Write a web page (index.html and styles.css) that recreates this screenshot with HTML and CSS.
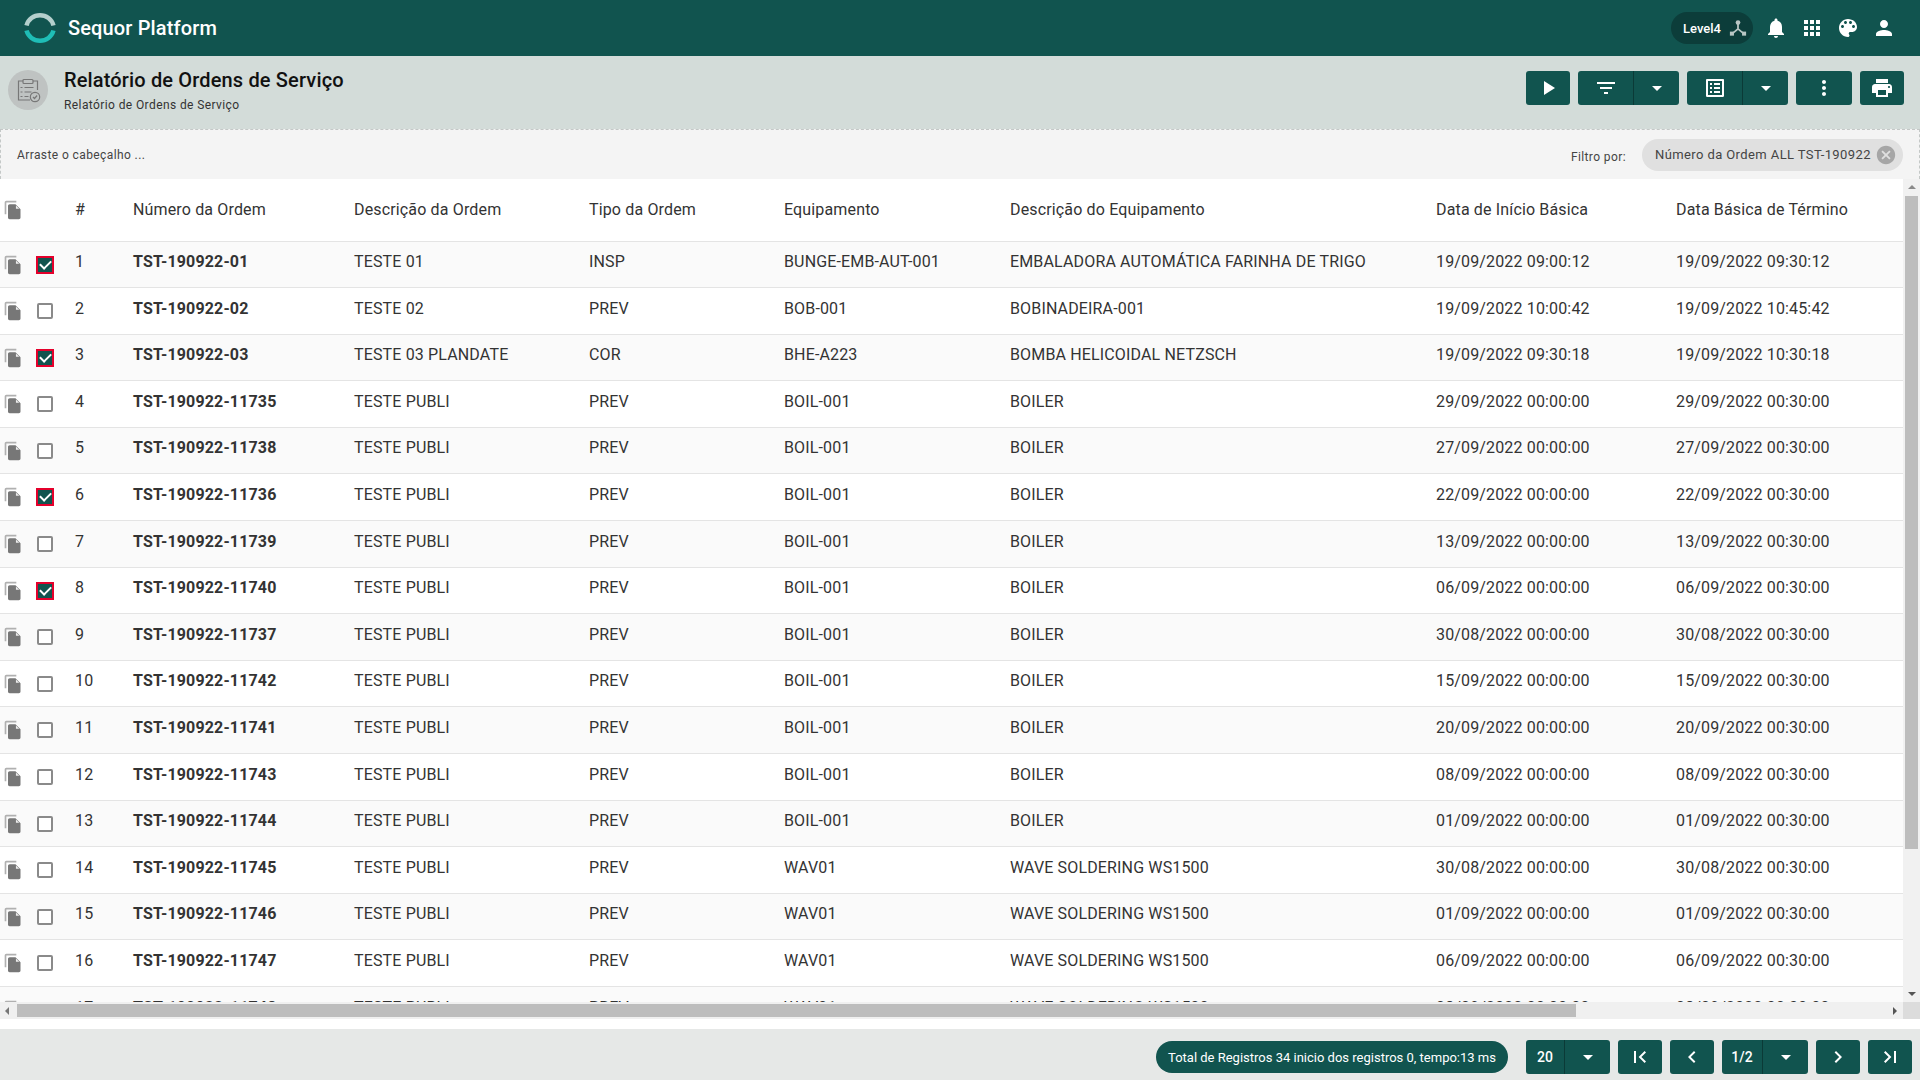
FILE: index.html
```html
<!DOCTYPE html>
<html>
<head>
  <meta charset="utf-8">
  <title>Relatório de Ordens de Serviço</title>
  <link rel="stylesheet" href="styles.css">
</head>
<body>
  <svg class="iconDefs" width="0" height="0">
    <symbol id="i-play" viewBox="0 0 24 24"><path d="M8 5v14l11-7z"/></symbol>
    <symbol id="i-filter" viewBox="0 0 24 24"><path d="M10 18h4v-2h-4v2zM3 6v2h18V6H3zm3 7h12v-2H6v2z"/></symbol>
    <symbol id="i-drop" viewBox="0 0 24 24"><path d="M7 10l5 5 5-5z"/></symbol>
    <symbol id="i-list" viewBox="0 0 24 24"><path d="M19 5v14H5V5h14m1.1-2H3.900c-.5 0-.9.4-.9.9v16.200c0 .4.4.9.9.9h16.200c.4 0 .9-.5.9-.9V3.900c0-.5-.5-.9-.9-.9zM11 7h6v2h-6V7zm0 4h6v2h-6v-2zm0 4h6v2h-6zM7 7h2v2H7zm0 4h2v2H7zm0 4h2v2H7z"/></symbol>
    <symbol id="i-more" viewBox="0 0 24 24"><path d="M12 8c1.100 0 2-.9 2-2s-.9-2-2-2-2 .9-2 2 .9 2 2 2zm0 2c-1.100 0-2 .9-2 2s.9 2 2 2 2-.9 2-2-.9-2-2-2zm0 6c-1.100 0-2 .9-2 2s.9 2 2 2 2-.9 2-2-.9-2-2-2z"/></symbol>
    <symbol id="i-print" viewBox="0 0 24 24"><path d="M19 8H5c-1.660 0-3 1.340-3 3v6h4v4h12v-4h4v-6c0-1.660-1.340-3-3-3zm-3 11H8v-5h8v5zm3-7c-.55 0-1-.45-1-1s.45-1 1-1 1 .45 1 1-.45 1-1 1zm-1-9H6v4h12V3z"/></symbol>
    <symbol id="i-bell" viewBox="0 0 24 24"><path d="M12 22c1.100 0 2-.9 2-2h-4c0 1.100.89 2 2 2zm6-6v-5c0-3.070-1.640-5.640-4.500-6.320V4c0-.83-.67-1.500-1.500-1.500s-1.500.67-1.500 1.500v.68C7.630 5.360 6 7.920 6 11v5l-2 2v1h16v-1l-2-2z"/></symbol>
    <symbol id="i-apps" viewBox="0 0 24 24"><path d="M4 8h4V4H4v4zm6 12h4v-4h-4v4zm-6 0h4v-4H4v4zm0-6h4v-4H4v4zm6 0h4v-4h-4v4zm6-10v4h4V4h-4zm-6 4h4V4h-4v4zm6 6h4v-4h-4v4zm0 6h4v-4h-4v4z"/></symbol>
    <symbol id="i-palette" viewBox="0 0 24 24"><path d="M12 3c-4.970 0-9 4.030-9 9s4.030 9 9 9c.83 0 1.500-.67 1.500-1.500 0-.39-.15-.74-.39-1.010-.23-.26-.38-.61-.38-.99 0-.83.67-1.500 1.500-1.500H16c2.760 0 5-2.240 5-5 0-4.420-4.030-8-9-8zm-5.500 9c-.83 0-1.500-.67-1.500-1.500S5.670 9 6.500 9 8 9.670 8 10.500 7.330 12 6.500 12zm3-4C8.670 8 8 7.330 8 6.500S8.670 5 9.500 5s1.500.67 1.500 1.500S10.330 8 9.500 8zm5 0c-.83 0-1.500-.67-1.500-1.500S13.670 5 14.500 5s1.500.67 1.500 1.500S15.330 8 14.500 8zm3 4c-.83 0-1.500-.67-1.500-1.500S16.670 9 17.500 9s1.500.67 1.500 1.500-.67 1.500-1.500 1.500z"/></symbol>
    <symbol id="i-person" viewBox="0 0 24 24"><path d="M12 12c2.210 0 4-1.790 4-4s-1.790-4-4-4-4 1.790-4 4 1.790 4 4 4zm0 2c-2.670 0-8 1.340-8 4v2h16v-2c0-2.660-5.330-4-8-4z"/></symbol>
    <symbol id="i-copy" viewBox="0 0 24 24"><path fill="#b0b0b0" d="M16 1H4c-1.100 0-2 .9-2 2v14h2V3h12V1z"/><path fill="#777" d="M15 5l6 6v10c0 1.100-.9 2-2 2H7.990C6.890 23 6 22.100 6 21l.01-14c0-1.100.89-2 1.990-2h7z"/><path fill="#eee" d="M15.500 6.500v4h4z"/></symbol>
    <symbol id="i-cancel" viewBox="0 0 24 24"><path d="M12 2C6.470 2 2 6.470 2 12s4.470 10 10 10 10-4.470 10-10S17.530 2 12 2zm5 13.590L15.590 17 12 13.410 8.410 17 7 15.590 10.590 12 7 8.410 8.410 7 12 10.590 15.590 7 17 8.410 13.410 12 17 15.590z"/></symbol>
    <symbol id="i-first" viewBox="0 0 24 24"><path d="M6 6h2v12H6zM18 7.400 16.600 6l-6 6 6 6 1.400-1.400-4.600-4.600z"/></symbol>
    <symbol id="i-prev" viewBox="0 0 24 24"><path d="M15.400 7.400 14 6l-6 6 6 6 1.400-1.400-4.600-4.600z"/></symbol>
    <symbol id="i-next" viewBox="0 0 24 24"><path d="M8.600 16.600 10 18l6-6-6-6-1.400 1.400 4.600 4.600z"/></symbol>
    <symbol id="i-last" viewBox="0 0 24 24"><path d="M16 6h2v12h-2zM6 16.600 7.400 18l6-6-6-6L6 7.400l4.600 4.600z"/></symbol>
  </svg>

  <header class="topBar">
    <div class="brand">
      <svg class="brandLogo" viewBox="0 0 32 32">
        <path d="M2.500 13.500a14 14 0 0 1 27 0" fill="none" stroke="#b4cfcc" stroke-width="4.500"/>
        <path d="M2.500 18.500a14 14 0 0 0 27 0" fill="none" stroke="#1fbdb6" stroke-width="4.500"/>
      </svg>
      <span class="brandName">Sequor Platform</span>
    </div>
    <div class="topActions">
      <div class="levelPill">
        <span>Level4</span>
        <svg class="levelIcon" viewBox="0 0 20 20">
          <path d="M10 5v6M10 11l-6 5M10 11l6 5" stroke="#b9c6c4" stroke-width="2" fill="none"/>
          <circle cx="10" cy="4" r="2.600" fill="#b9c6c4"/>
          <rect x="1" y="14" width="4.500" height="4.500" fill="#b9c6c4"/>
          <rect x="14.500" y="14" width="4.500" height="4.500" fill="#b9c6c4"/>
        </svg>
      </div>
      <svg class="topIcon"><use href="#i-bell"/></svg>
      <svg class="topIcon"><use href="#i-apps"/></svg>
      <svg class="topIcon"><use href="#i-palette"/></svg>
      <svg class="topIcon"><use href="#i-person"/></svg>
    </div>
  </header>

  <section class="pageHead">
    <div class="pageAvatar">
      <svg viewBox="0 0 26 26" class="pageAvatarIcon">
        <path d="M8 4H3.500v19H15M18 4h4.500v9" fill="none" stroke="#777" stroke-width="1.200"/>
        <rect x="8" y="2.500" width="10" height="4" rx="1" fill="none" stroke="#777" stroke-width="1.200"/>
        <path d="M9.500 10.500h9M9.500 15h7M9.500 19.500h4M5.500 10.500h2M5.500 15h2M5.500 19.500h2" stroke="#777" stroke-width="1.200"/>
        <circle cx="20" cy="20" r="4.700" fill="none" stroke="#777" stroke-width="1.200"/>
        <path d="M18 20l1.500 1.500 2.600-3" fill="none" stroke="#777" stroke-width="1.200"/>
      </svg>
    </div>
    <div class="pageTitles">
      <h1>Relatório de Ordens de Serviço</h1>
      <p>Relatório de Ordens de Serviço</p>
    </div>
    <div class="toolbar">
      <button class="tbtn w44"><svg><use href="#i-play"/></svg></button>
      <div class="splitBtn">
        <button class="tbtn w56"><svg><use href="#i-filter"/></svg></button>
        <button class="tbtn w45"><svg><use href="#i-drop"/></svg></button>
      </div>
      <div class="splitBtn">
        <button class="tbtn w56"><svg><use href="#i-list"/></svg></button>
        <button class="tbtn w45"><svg><use href="#i-drop"/></svg></button>
      </div>
      <button class="tbtn w56"><svg><use href="#i-more"/></svg></button>
      <button class="tbtn w44"><svg><use href="#i-print"/></svg></button>
    </div>
  </section>

  <section class="dragBar">
    <span class="dragHint">Arraste o cabeçalho ...</span>
    <span class="filterLabel">Filtro por:</span>
    <div class="filterChip">
      <span>Número da Ordem ALL TST-190922</span>
      <svg><use href="#i-cancel"/></svg>
    </div>
  </section>

  <section class="gridArea">
    <div class="gridMain">
      <div class="gridClip">
        <table class="orders">
          <colgroup>
            <col class="cCopy"><col class="cCheck"><col class="cIdx"><col class="cNum"><col class="cDesc"><col class="cTipo"><col class="cEquip"><col class="cEqDesc"><col class="cIni"><col class="cFim">
          </colgroup>
          <thead>
            <tr>
              <th class="icoCell"><svg class="copyIcon"><use href="#i-copy"/></svg></th>
              <th></th>
              <th>#</th>
              <th>Número da Ordem</th>
              <th>Descrição da Ordem</th>
              <th>Tipo da Ordem</th>
              <th>Equipamento</th>
              <th>Descrição do Equipamento</th>
              <th>Data de Início Básica</th>
              <th>Data Básica de Término</th>
            </tr>
          </thead>
          <tbody>
            <tr><td class="icoCell"><svg class="copyIcon"><use href="#i-copy"/></svg></td><td class="chkCell"><span class="chk on"></span></td><td>1</td><td class="num">TST-190922-01</td><td>TESTE 01</td><td>INSP</td><td>BUNGE-EMB-AUT-001</td><td>EMBALADORA AUTOMÁTICA FARINHA DE TRIGO</td><td>19/09/2022 09:00:12</td><td>19/09/2022 09:30:12</td></tr>
            <tr><td class="icoCell"><svg class="copyIcon"><use href="#i-copy"/></svg></td><td class="chkCell"><span class="chk"></span></td><td>2</td><td class="num">TST-190922-02</td><td>TESTE 02</td><td>PREV</td><td>BOB-001</td><td>BOBINADEIRA-001</td><td>19/09/2022 10:00:42</td><td>19/09/2022 10:45:42</td></tr>
            <tr><td class="icoCell"><svg class="copyIcon"><use href="#i-copy"/></svg></td><td class="chkCell"><span class="chk on"></span></td><td>3</td><td class="num">TST-190922-03</td><td>TESTE 03 PLANDATE</td><td>COR</td><td>BHE-A223</td><td>BOMBA HELICOIDAL NETZSCH</td><td>19/09/2022 09:30:18</td><td>19/09/2022 10:30:18</td></tr>
            <tr><td class="icoCell"><svg class="copyIcon"><use href="#i-copy"/></svg></td><td class="chkCell"><span class="chk"></span></td><td>4</td><td class="num">TST-190922-11735</td><td>TESTE PUBLI</td><td>PREV</td><td>BOIL-001</td><td>BOILER</td><td>29/09/2022 00:00:00</td><td>29/09/2022 00:30:00</td></tr>
            <tr><td class="icoCell"><svg class="copyIcon"><use href="#i-copy"/></svg></td><td class="chkCell"><span class="chk"></span></td><td>5</td><td class="num">TST-190922-11738</td><td>TESTE PUBLI</td><td>PREV</td><td>BOIL-001</td><td>BOILER</td><td>27/09/2022 00:00:00</td><td>27/09/2022 00:30:00</td></tr>
            <tr><td class="icoCell"><svg class="copyIcon"><use href="#i-copy"/></svg></td><td class="chkCell"><span class="chk on"></span></td><td>6</td><td class="num">TST-190922-11736</td><td>TESTE PUBLI</td><td>PREV</td><td>BOIL-001</td><td>BOILER</td><td>22/09/2022 00:00:00</td><td>22/09/2022 00:30:00</td></tr>
            <tr><td class="icoCell"><svg class="copyIcon"><use href="#i-copy"/></svg></td><td class="chkCell"><span class="chk"></span></td><td>7</td><td class="num">TST-190922-11739</td><td>TESTE PUBLI</td><td>PREV</td><td>BOIL-001</td><td>BOILER</td><td>13/09/2022 00:00:00</td><td>13/09/2022 00:30:00</td></tr>
            <tr><td class="icoCell"><svg class="copyIcon"><use href="#i-copy"/></svg></td><td class="chkCell"><span class="chk on"></span></td><td>8</td><td class="num">TST-190922-11740</td><td>TESTE PUBLI</td><td>PREV</td><td>BOIL-001</td><td>BOILER</td><td>06/09/2022 00:00:00</td><td>06/09/2022 00:30:00</td></tr>
            <tr><td class="icoCell"><svg class="copyIcon"><use href="#i-copy"/></svg></td><td class="chkCell"><span class="chk"></span></td><td>9</td><td class="num">TST-190922-11737</td><td>TESTE PUBLI</td><td>PREV</td><td>BOIL-001</td><td>BOILER</td><td>30/08/2022 00:00:00</td><td>30/08/2022 00:30:00</td></tr>
            <tr><td class="icoCell"><svg class="copyIcon"><use href="#i-copy"/></svg></td><td class="chkCell"><span class="chk"></span></td><td>10</td><td class="num">TST-190922-11742</td><td>TESTE PUBLI</td><td>PREV</td><td>BOIL-001</td><td>BOILER</td><td>15/09/2022 00:00:00</td><td>15/09/2022 00:30:00</td></tr>
            <tr><td class="icoCell"><svg class="copyIcon"><use href="#i-copy"/></svg></td><td class="chkCell"><span class="chk"></span></td><td>11</td><td class="num">TST-190922-11741</td><td>TESTE PUBLI</td><td>PREV</td><td>BOIL-001</td><td>BOILER</td><td>20/09/2022 00:00:00</td><td>20/09/2022 00:30:00</td></tr>
            <tr><td class="icoCell"><svg class="copyIcon"><use href="#i-copy"/></svg></td><td class="chkCell"><span class="chk"></span></td><td>12</td><td class="num">TST-190922-11743</td><td>TESTE PUBLI</td><td>PREV</td><td>BOIL-001</td><td>BOILER</td><td>08/09/2022 00:00:00</td><td>08/09/2022 00:30:00</td></tr>
            <tr><td class="icoCell"><svg class="copyIcon"><use href="#i-copy"/></svg></td><td class="chkCell"><span class="chk"></span></td><td>13</td><td class="num">TST-190922-11744</td><td>TESTE PUBLI</td><td>PREV</td><td>BOIL-001</td><td>BOILER</td><td>01/09/2022 00:00:00</td><td>01/09/2022 00:30:00</td></tr>
            <tr><td class="icoCell"><svg class="copyIcon"><use href="#i-copy"/></svg></td><td class="chkCell"><span class="chk"></span></td><td>14</td><td class="num">TST-190922-11745</td><td>TESTE PUBLI</td><td>PREV</td><td>WAV01</td><td>WAVE SOLDERING WS1500</td><td>30/08/2022 00:00:00</td><td>30/08/2022 00:30:00</td></tr>
            <tr><td class="icoCell"><svg class="copyIcon"><use href="#i-copy"/></svg></td><td class="chkCell"><span class="chk"></span></td><td>15</td><td class="num">TST-190922-11746</td><td>TESTE PUBLI</td><td>PREV</td><td>WAV01</td><td>WAVE SOLDERING WS1500</td><td>01/09/2022 00:00:00</td><td>01/09/2022 00:30:00</td></tr>
            <tr><td class="icoCell"><svg class="copyIcon"><use href="#i-copy"/></svg></td><td class="chkCell"><span class="chk"></span></td><td>16</td><td class="num">TST-190922-11747</td><td>TESTE PUBLI</td><td>PREV</td><td>WAV01</td><td>WAVE SOLDERING WS1500</td><td>06/09/2022 00:00:00</td><td>06/09/2022 00:30:00</td></tr>
            <tr><td class="icoCell"><svg class="copyIcon"><use href="#i-copy"/></svg></td><td class="chkCell"><span class="chk"></span></td><td>17</td><td class="num">TST-190922-11748</td><td>TESTE PUBLI</td><td>PREV</td><td>WAV01</td><td>WAVE SOLDERING WS1500</td><td>08/09/2022 00:00:00</td><td>08/09/2022 00:30:00</td></tr>
          </tbody>
        </table>
      </div>
      <div class="vScroll">
        <span class="arrowUp"></span>
        <span class="vThumb"></span>
        <span class="arrowDown"></span>
      </div>
    </div>
    <div class="hScroll">
      <span class="arrowLeft"></span>
      <span class="hThumb"></span>
      <span class="arrowRight"></span>
      <span class="scrollCorner"></span>
    </div>
  </section>

  <footer class="pager">
    <div class="totalPill">Total de Registros 34 inicio dos registros 0, tempo:13 ms</div>
    <div class="splitBtn">
      <button class="tbtn w39 pagerText">20</button>
      <button class="tbtn w45"><svg><use href="#i-drop"/></svg></button>
    </div>
    <button class="tbtn w44"><svg><use href="#i-first"/></svg></button>
    <button class="tbtn w44"><svg><use href="#i-prev"/></svg></button>
    <div class="splitBtn">
      <button class="tbtn w41 pagerText">1/2</button>
      <button class="tbtn w45"><svg><use href="#i-drop"/></svg></button>
    </div>
    <button class="tbtn w44"><svg><use href="#i-next"/></svg></button>
    <button class="tbtn w44"><svg><use href="#i-last"/></svg></button>
  </footer>
</body>
</html>
```

FILE: styles.css
```css
* {
  box-sizing: border-box;
}
html, body {
  margin: 0;
  height: 100%;
}
body {
  display: flex;
  flex-direction: column;
  height: 1080px;
  overflow: hidden;
  background: #fff;
  font-family: Roboto, "Liberation Sans", sans-serif;
  color: #333;
}
.iconDefs {
  position: absolute;
}

/* barra superior */
.topBar {
  display: flex;
  align-items: center;
  justify-content: space-between;
  height: 56px;
  padding: 0 18px 0 24px;
  background: #11544f;
  flex-shrink: 0;
}
.brand {
  display: flex;
  align-items: center;
  gap: 12px;
}
.brandLogo {
  width: 32px;
  height: 32px;
}
.brandName {
  font-size: 20px;
  font-weight: 500;
  letter-spacing: .15px;
  color: #fff;
}
.topActions {
  display: flex;
  align-items: center;
}
.levelPill {
  display: flex;
  align-items: center;
  gap: 8px;
  width: 82px;
  height: 32px;
  padding-left: 12px;
  margin-right: 5px;
  border-radius: 16px;
  background: #0c3d3a;
  font-size: 13px;
  font-weight: 500;
  color: #fff;
}
.levelIcon {
  width: 18px;
  height: 18px;
}
.topIcon {
  width: 24px;
  height: 24px;
  margin: 0 6px;
  fill: #fff;
}

/* titulo da pagina */
.pageHead {
  display: flex;
  height: 73px;
  padding: 14px 16px 0 8px;
  background: #d3dcd9;
  flex-shrink: 0;
}
.pageAvatar {
  display: flex;
  align-items: center;
  justify-content: center;
  width: 40px;
  height: 40px;
  border-radius: 50%;
  background: #bfc3c2;
}
.pageAvatarIcon {
  width: 26px;
  height: 26px;
}
.pageTitles {
  flex-grow: 1;
  margin-left: 16px;
}
.pageTitles h1 {
  margin: -2px 0 0;
  font-size: 20px;
  line-height: 24px;
  font-weight: 500;
  letter-spacing: .15px;
  color: #111;
}
.pageTitles p {
  margin: 5px 0 0;
  font-size: 12px;
  line-height: 16px;
  letter-spacing: .4px;
  color: #333;
}
.toolbar {
  display: flex;
  gap: 8px;
  margin-top: 1px;
}
.splitBtn {
  display: flex;
}
.splitBtn .tbtn:first-child {
  border-radius: 3px 0 0 3px;
  border-right: 1px solid #0b3a37;
}
.splitBtn .tbtn:last-child {
  border-radius: 0 3px 3px 0;
}
.tbtn {
  display: flex;
  align-items: center;
  justify-content: center;
  height: 34px;
  padding: 0;
  border: none;
  border-radius: 3px;
  background: #11544f;
  color: #fff;
  font-family: inherit;
}
.tbtn svg {
  width: 24px;
  height: 24px;
  fill: #fff;
}
.w39 { width: 39px; }
.w41 { width: 41px; }
.w44 { width: 44px; }
.w45 { width: 45px; }
.w56 { width: 56px; }

/* area de agrupamento */
.dragBar {
  display: flex;
  align-items: center;
  height: 50px;
  padding: 0 16px;
  background: #f4f4f4;
  border: 1px dashed #c4c8c7;
  border-bottom: none;
  flex-shrink: 0;
  font-size: 12px;
  letter-spacing: .4px;
  color: #444;
}
.dragHint {
  flex-grow: 1;
}
.filterLabel {
  margin: 4px 16px 0 0;
}
.filterChip {
  display: flex;
  align-items: center;
  justify-content: space-between;
  width: 261px;
  height: 32px;
  padding: 0 6px 0 13px;
  border-radius: 16px;
  background: #e0e0e0;
  font-size: 13px;
  color: #444;
}
.filterChip svg {
  width: 22px;
  height: 22px;
  fill: #a6a6a6;
}

/* grade */
.gridArea {
  display: flex;
  flex-direction: column;
  height: 840px;
  flex-shrink: 0;
}
.gridMain {
  display: flex;
  height: 823px;
}
.gridClip {
  flex-grow: 1;
  overflow: hidden;
}
.orders {
  width: 1903px;
  table-layout: fixed;
  border-collapse: collapse;
  font-size: 16px;
  letter-spacing: .15px;
  color: #333;
}
.cCopy { width: 32px; }
.cCheck { width: 43px; }
.cIdx { width: 58px; }
.cNum { width: 221px; }
.cDesc { width: 235px; }
.cTipo { width: 195px; }
.cEquip { width: 226px; }
.cEqDesc { width: 426px; }
.cIni { width: 240px; }
.cFim { width: 227px; }
.orders th {
  height: 62px;
  padding: 0;
  text-align: left;
  font-weight: 400;
  background: #fff;
  border-bottom: 1px solid #e4e4e4;
}
.orders td {
  height: 46.6px;
  padding: 10.5px 0 0;
  vertical-align: top;
  white-space: nowrap;
  border-bottom: 1px solid #e4e4e4;
}
.orders tbody tr:nth-child(odd) {
  background: #fafafa;
}
.orders tbody tr:nth-child(even) {
  background: #fff;
}
.orders .num {
  font-weight: 700;
}
.orders .icoCell {
  padding-left: 4px;
}
.orders td.icoCell {
  padding-top: 13px;
}
.orders td.chkCell {
  padding-top: 15px;
}
.copyIcon {
  display: block;
  width: 20px;
  height: 20px;
  margin-left: -1px;
}
.chk {
  display: block;
  width: 16px;
  height: 16px;
  margin-left: 5px;
  border: 2px solid #8a8a8a;
  border-radius: 2px;
  background: #fff;
}
.chk.on {
  position: relative;
  width: 18px;
  height: 18px;
  margin: -1px 0 0 4px;
  border: 2px solid #e4002b;
  border-radius: 0;
  background: #11544f;
}
.chk.on::after {
  content: '';
  position: absolute;
  left: 2px;
  top: 2px;
  width: 9px;
  height: 5px;
  border-left: 2px solid #fff;
  border-bottom: 2px solid #fff;
  transform: rotate(-45deg);
}

/* barras de rolagem */
.vScroll {
  display: flex;
  flex-direction: column;
  align-items: center;
  width: 17px;
  background: #f1f1f1;
  flex-shrink: 0;
}
.vThumb {
  width: 13px;
  height: 653px;
  margin-top: 7px;
  background: #bdbdbd;
}
.arrowUp, .arrowDown, .arrowLeft, .arrowRight {
  width: 0;
  height: 0;
  border: 4px solid transparent;
}
.arrowUp {
  margin-top: 6px;
  border-top: none;
  border-bottom-color: #8a8a8a;
}
.arrowDown {
  margin-top: auto;
  margin-bottom: 6px;
  border-bottom: none;
  border-top-color: #555;
}
.hScroll {
  display: flex;
  align-items: center;
  height: 17px;
  background: #f0f0f0;
}
.arrowLeft {
  margin-left: 5px;
  border-left: none;
  border-right-color: #777;
}
.hThumb {
  width: 1559px;
  height: 13px;
  margin-left: 8px;
  background: #bdbdbd;
}
.arrowRight {
  margin-left: auto;
  margin-right: 6px;
  border-right: none;
  border-left-color: #555;
}
.scrollCorner {
  width: 17px;
  height: 17px;
  background: #dcdcdc;
}

/* rodape */
.pager {
  display: flex;
  align-items: center;
  justify-content: flex-end;
  gap: 8px;
  flex-grow: 1;
  margin-top: 10px;
  padding: 5px 8px 0 0;
  background: #e6e8e7;
}
.totalPill {
  display: flex;
  align-items: center;
  justify-content: center;
  width: 352px;
  height: 32px;
  margin-right: 10px;
  border-radius: 16px;
  background: #11544f;
  font-size: 13px;
  color: #fff;
}
.pagerText {
  font-size: 14px;
  font-weight: 500;
}
```
